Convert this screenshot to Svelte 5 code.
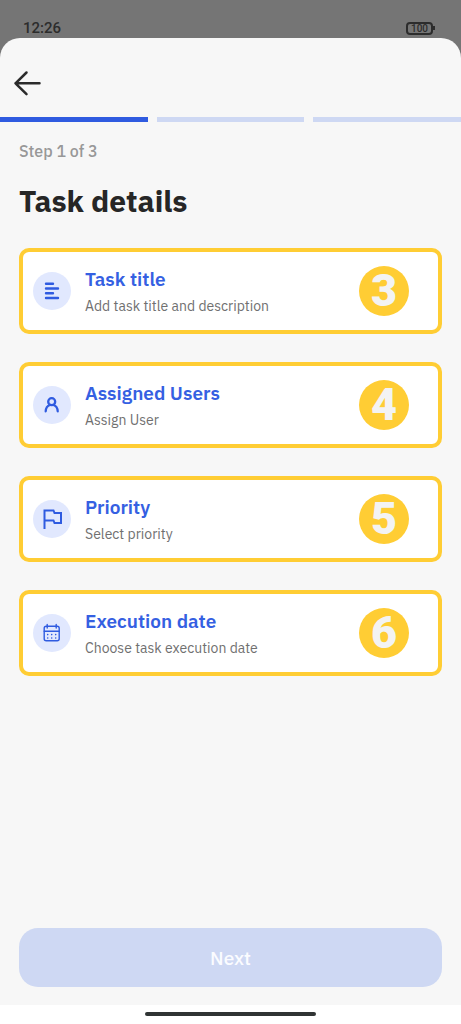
<script>
  const fields = [
    { icon: 'lines', title: 'Task title', hint: 'Add task title and description', mark: 3 },
    { icon: 'user', title: 'Assigned Users', hint: 'Assign User', mark: 4 },
    { icon: 'flag', title: 'Priority', hint: 'Select priority', mark: 5 },
    { icon: 'calendar', title: 'Execution date', hint: 'Choose task execution date', mark: 6 }
  ];
  const steps = [1, 2, 3];
  const current = 1;
</script>

<div class="screen">
  <header class="status">
    <span class="time">12:26</span>
    <span class="battery"><span class="level">100</span><span class="tip"></span></span>
  </header>

  <main class="sheet">
    <button class="back" aria-label="Back">
      <svg width="28" height="26" viewBox="0 0 28 26" fill="none" stroke="#2b2b2b" stroke-width="2.5" stroke-linecap="round" stroke-linejoin="round">
        <path d="M26.500 13.300H2.500M13.500 2.500 2.500 13.300l11 10.800" />
      </svg>
    </button>

    <div class="progress">
      {#each steps as step}
        <span class:done={step <= current}></span>
      {/each}
    </div>

    <div class="content">
      <p class="step">Step {current} of {steps.length}</p>
      <h1>Task details</h1>

      <div class="cards">
        {#each fields as field}
          <button class="card">
            <span class="icon">
              {#if field.icon === 'lines'}
                <svg width="38" height="38" viewBox="0 0 38 38" fill="none" stroke="#2f5be0" stroke-width="2.4" stroke-linecap="round">
                  <path d="M13 11.700h7M13 16.500h12M13 21.200h7M13 26h12" />
                </svg>
              {:else if field.icon === 'user'}
                <svg width="38" height="38" viewBox="0 0 38 38" fill="none" stroke="#2f5be0" stroke-width="2.3" stroke-linecap="round">
                  <circle cx="18.700" cy="15.700" r="3.500" />
                  <path d="M12.700 25.300c.2-3.500 1.800-5.600 4.200-6.300M24.700 25.300c-.2-3.500-1.800-5.600-4.200-6.300" />
                </svg>
              {:else if field.icon === 'flag'}
                <svg width="38" height="38" viewBox="0 0 38 38" fill="none" stroke="#2f5be0" stroke-width="2">
                  <path d="M11.500 29V10.500H20.500L21.500 13H28V23H21.500L20.500 20.500H11.500" />
                </svg>
              {:else}
                <svg width="38" height="38" viewBox="0 0 38 38" fill="none" stroke="#2f5be0" stroke-width="1.400" stroke-linecap="round">
                  <rect x="11.200" y="12.300" width="15" height="14.500" rx="2" />
                  <path d="M11.200 17.300h15M14.200 10.500v3.500M23.200 10.500v3.500" />
                  <path d="M14.700 20.600h.01M18.700 20.600h.01M22.700 20.600h.01M14.700 24h.01M18.700 24h.01M22.700 24h.01" stroke-width="1.600" />
                </svg>
              {/if}
            </span>
            <span class="text">
              <span class="title">{field.title}</span>
              <span class="hint">{field.hint}</span>
            </span>
            <span class="mark">{field.mark}</span>
          </button>
        {/each}
      </div>

      <button class="next" disabled>Next</button>
    </div>
  </main>

  <footer class="gesture"><span></span></footer>
</div>

<style>
  :global(body) {
    background: #757575;
  }
  .screen {
    display: flex;
    flex-direction: column;
    min-height: 100vh;
    font-family: 'IBM Plex Sans', Roboto, sans-serif;
    background: #757575;
  }
  button {
    font-family: inherit;
    border: 0;
    padding: 0;
    background: none;
  }
  .status {
    display: flex;
    justify-content: space-between;
    align-items: center;
    padding: 20px 26px 2px 23px;
    height: 16px;
    color: #2c2c2c;
  }
  .time {
    font: 500 15px/16px Roboto, sans-serif;
  }
  .battery {
    display: flex;
    align-items: center;
  }
  .level {
    box-sizing: border-box;
    width: 27px;
    height: 13px;
    border: 2px solid #2c2c2c;
    border-radius: 4px;
    font: 500 10px/10px Roboto, sans-serif;
    text-align: center;
  }
  .tip {
    width: 2px;
    height: 4px;
    background: #2c2c2c;
  }
  .sheet {
    flex: 1;
    display: flex;
    flex-direction: column;
    background: #f7f7f7;
    border-radius: 20px 20px 0 0;
  }
  .back {
    align-self: flex-start;
    display: flex;
    padding: 32px 13px 21px;
  }
  .progress {
    display: grid;
    grid-template-columns: repeat(3, 1fr);
    gap: 9px;
  }
  .progress span {
    height: 5px;
    background: #ced8f3;
  }
  .progress .done {
    background: #2f5be0;
  }
  .content {
    flex: 1;
    display: flex;
    flex-direction: column;
    padding: 18px 19px;
  }
  .step {
    margin: 0;
    font-size: 16px;
    font-weight: 500;
    line-height: 22px;
    color: #989898;
  }
  h1 {
    margin: 18px 0 26px;
    font-size: 30px;
    font-weight: 700;
    line-height: 42px;
    color: #262626;
  }
  .cards {
    display: flex;
    flex-direction: column;
    gap: 28px;
  }
  .card {
    display: flex;
    align-items: center;
    gap: 14px;
    padding: 14px 29px 14px 10px;
    border: 4px solid #ffcd34;
    border-radius: 10px;
    background: #fff;
    text-align: left;
  }
  .icon {
    display: flex;
    border-radius: 50%;
    background: #e1e8fe;
  }
  .text {
    flex: 1;
    display: flex;
    flex-direction: column;
    gap: 4px;
  }
  .title {
    font-size: 19px;
    font-weight: 600;
    line-height: 25px;
    color: #3560e2;
  }
  .hint {
    font-size: 14px;
    line-height: 20px;
    color: #707070;
  }
  .mark {
    width: 50px;
    height: 50px;
    border-radius: 50%;
    background: #ffcd34;
    color: #f3f3f3;
    font: 900 45px/50px Roboto, sans-serif;
    text-align: center;
  }
  .next {
    margin-top: auto;
    height: 59px;
    border-radius: 19px;
    background: #ced8f3;
    color: #fbfcff;
    font-size: 19px;
    font-weight: 500;
  }
  .gesture {
    display: flex;
    justify-content: center;
    padding: 7px 0 8px;
    background: #fff;
  }
  .gesture span {
    width: 37%;
    height: 4px;
    border-radius: 2px;
    background: #303434;
  }
</style>
